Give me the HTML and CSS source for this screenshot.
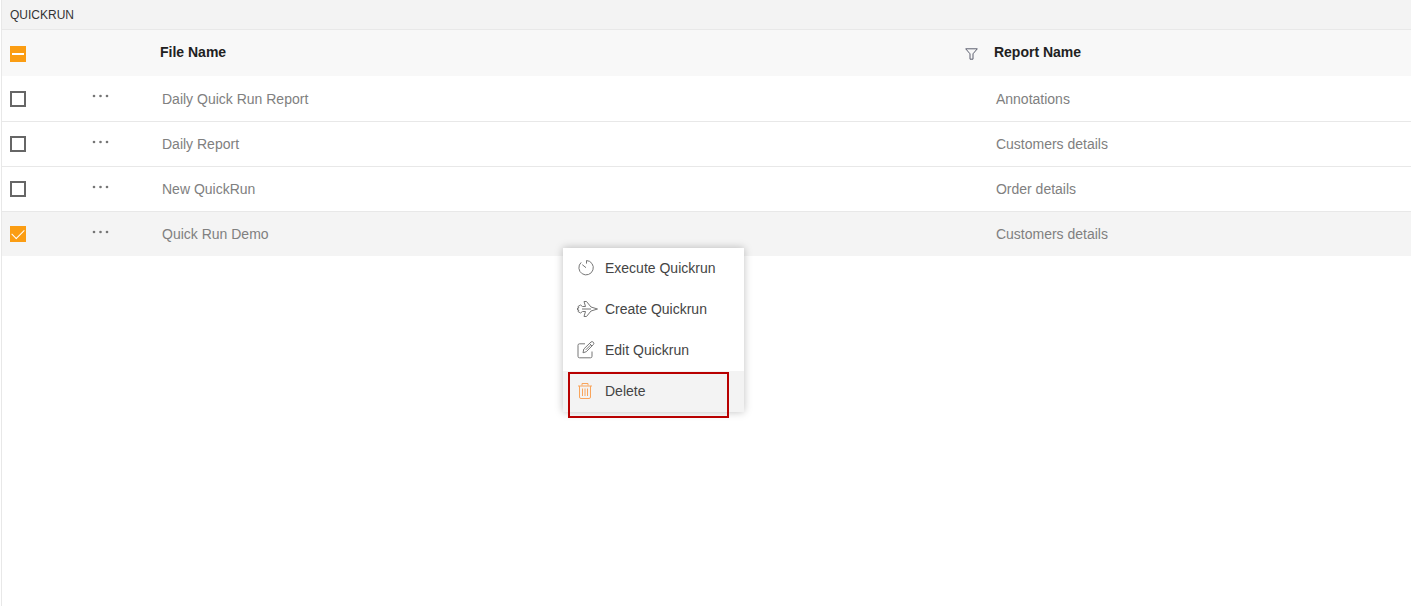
FILE: index.html
```html
<!DOCTYPE html>
<html lang="en">
<head>
<meta charset="utf-8">
<title>Quickrun</title>
<link rel="stylesheet" href="styles.css">
</head>
<body>
<main class="panel">
  <h1 class="panel-title">QUICKRUN</h1>
  <table class="grid">
    <colgroup><col class="col-check"><col class="col-more"><col><col class="col-report"></colgroup>
    <thead>
      <tr>
        <th><input class="check mixed" type="checkbox" aria-label="Select all files"></th>
        <th></th>
        <th scope="col"><div class="head-cell"><span>File Name</span>
          <button class="filter" type="button" aria-label="Filter file name"><svg width="13" height="12" viewBox="0 0 13 12"><path d="M.7.8h11.6L8 5.8v5.4H5V5.8z"/></svg></button></div></th>
        <th scope="col">Report Name</th>
      </tr>
    </thead>
    <tbody>
      <tr>
        <td><input class="check" type="checkbox" aria-label="Select Daily Quick Run Report"></td>
        <td><button class="more" type="button" aria-label="More actions"><svg width="18" height="4" viewBox="0 0 18 4"><circle cx="2" cy="2" r="1.3"/><circle cx="8.500" cy="2" r="1.3"/><circle cx="15" cy="2" r="1.3"/></svg></button></td>
        <td>Daily Quick Run Report</td><td>Annotations</td>
      </tr>
      <tr>
        <td><input class="check" type="checkbox" aria-label="Select Daily Report"></td>
        <td><button class="more" type="button" aria-label="More actions"><svg width="18" height="4" viewBox="0 0 18 4"><circle cx="2" cy="2" r="1.3"/><circle cx="8.500" cy="2" r="1.3"/><circle cx="15" cy="2" r="1.3"/></svg></button></td>
        <td>Daily Report</td><td>Customers details</td>
      </tr>
      <tr>
        <td><input class="check" type="checkbox" aria-label="Select New QuickRun"></td>
        <td><button class="more" type="button" aria-label="More actions"><svg width="18" height="4" viewBox="0 0 18 4"><circle cx="2" cy="2" r="1.3"/><circle cx="8.500" cy="2" r="1.3"/><circle cx="15" cy="2" r="1.3"/></svg></button></td>
        <td>New QuickRun</td><td>Order details</td>
      </tr>
      <tr class="selected">
        <td><input class="check" type="checkbox" checked aria-label="Select Quick Run Demo"></td>
        <td><button class="more" type="button" aria-label="More actions"><svg width="18" height="4" viewBox="0 0 18 4"><circle cx="2" cy="2" r="1.3"/><circle cx="8.500" cy="2" r="1.3"/><circle cx="15" cy="2" r="1.3"/></svg></button></td>
        <td>Quick Run Demo</td><td>Customers details</td>
      </tr>
    </tbody>
  </table>
</main>
<div class="menu" role="menu">
  <button class="item" type="button" role="menuitem">
    <svg class="icon" viewBox="0 0 22 20"><path d="M4.200 4.400A7.200 7.200 0 1 0 9.500 2.500V5.600M5.300 6.700l3.700 3"/></svg>Execute Quickrun</button>
  <button class="item" type="button" role="menuitem">
    <svg class="icon" viewBox="0 0 22 20"><path d="M1 7.500L3.500 6l2 1.500H8.500L7 2.500h2.500L14 8l6.500 2-6.500 2-4.500 5.500H7l1.500-5h-3l-2 1.500L1 12.500l1-1.500H.5V9H2zM5 10h9"/></svg>Create Quickrun</button>
  <button class="item" type="button" role="menuitem">
    <svg class="icon" viewBox="0 0 22 20"><path d="M8 3.800H2.500Q1 3.800 1 5.300v11Q1 17.800 2.500 17.800h11q1.500 0 1.500-1.500V11.500M6 12.800l.8-3.800 7.200-7q1.200-.9 2.300.2 1.100 1.100.1 2.300l-7.100 7.200zM12.500 3.500l2.500 2.500M8.800 9.800l4.600-4.600"/></svg>Edit Quickrun</button>
  <button class="item active" type="button" role="menuitem">
    <svg class="icon trash" viewBox="0 0 22 20"><path d="M1 5h14M5 4.500V2.500h6v2M2.500 5v11q0 1.500 1.500 1.500h8q1.500 0 1.500-1.500V5M5.500 7.500v7.500M8 7.500v7.500M10.500 7.500v7.500"/></svg>Delete</button>
  <div class="highlight"></div>
</div>
</body>
</html>
```
FILE: styles.css
```css
* { box-sizing: border-box; }
body {
  margin: 0;
  background: #fff;
  color: #808080;
  font: 14px/20px "Liberation Sans", Arial, sans-serif;
}
button { padding: 0; border: 0; background: none; color: inherit; font: inherit; }
svg { display: block; fill: none; }
.panel { min-height: 100vh; margin-left: 1px; border-left: 1px solid #e8e8e8; }
.panel-title {
  margin: 0;
  padding: 5px 8px 4px;
  border-bottom: 1px solid #e8e8e8;
  background: #f3f3f3;
  color: #333;
  font-size: 12px;
  font-weight: 400;
  line-height: 20px;
}
.grid { width: 100%; border-collapse: separate; border-spacing: 0; table-layout: fixed; }
.col-check { width: 82px; }
.col-more { width: 76px; }
.col-report { width: 29.6%; }
th, td { height: 45px; padding: 0; text-align: left; }
th { height: 46px; padding-bottom: 2px; background: #f8f8f8; color: #212121; font-weight: 700; }
td { padding-left: 2px; border-bottom: 1px solid #e8e8e8; }
th:first-child, td:first-child { padding-left: 8px; }
td:nth-child(2) { padding-left: 8px; vertical-align: top; }
tbody tr:first-child td { height: 46px; }
.selected td { height: 44px; border-bottom: 0; background: #f4f4f4; }
.head-cell { display: flex; align-items: center; justify-content: space-between; padding-right: 16px; }
.filter { padding-top: 3px; }
.filter svg { stroke: #5c5f6e; }
.more { display: block; padding-top: 18px; }
.more svg { fill: #757575; }
.check {
  display: block;
  width: 16px;
  height: 16px;
  margin: 0;
  border: 2px solid #666;
  border-radius: 0;
  background: #fff;
  appearance: none;
}
.check:checked, .mixed { display: grid; place-items: center; border: 0; background: #fb9d13; }
.mixed { margin-top: 3px; }
.mixed::before { width: 12px; height: 2px; background: #fff; content: ""; }
.check:checked::before {
  width: 11px;
  height: 6px;
  margin-bottom: 3px;
  border: solid #fff;
  border-width: 0 0 1px 1px;
  transform: rotate(-45deg);
  content: "";
}
.menu {
  position: absolute;
  top: 248px;
  left: 563px;
  display: flex;
  flex-direction: column;
  width: 181px;
  background: #fff;
  box-shadow: 0 0 8px rgba(0, 0, 0, .25);
}
.item { display: flex; align-items: center; gap: 6px; height: 41px; padding: 0 0 1px 14px; color: #444; text-align: left; }
.icon { width: 22px; height: 20px; stroke: #777; }
.active { background: #f3f3f3; }
.trash { stroke: #f9a45b; }
.highlight { position: absolute; right: 15px; bottom: -6px; left: 5px; height: 46px; border: 2px solid #b80000; pointer-events: none; }
```
